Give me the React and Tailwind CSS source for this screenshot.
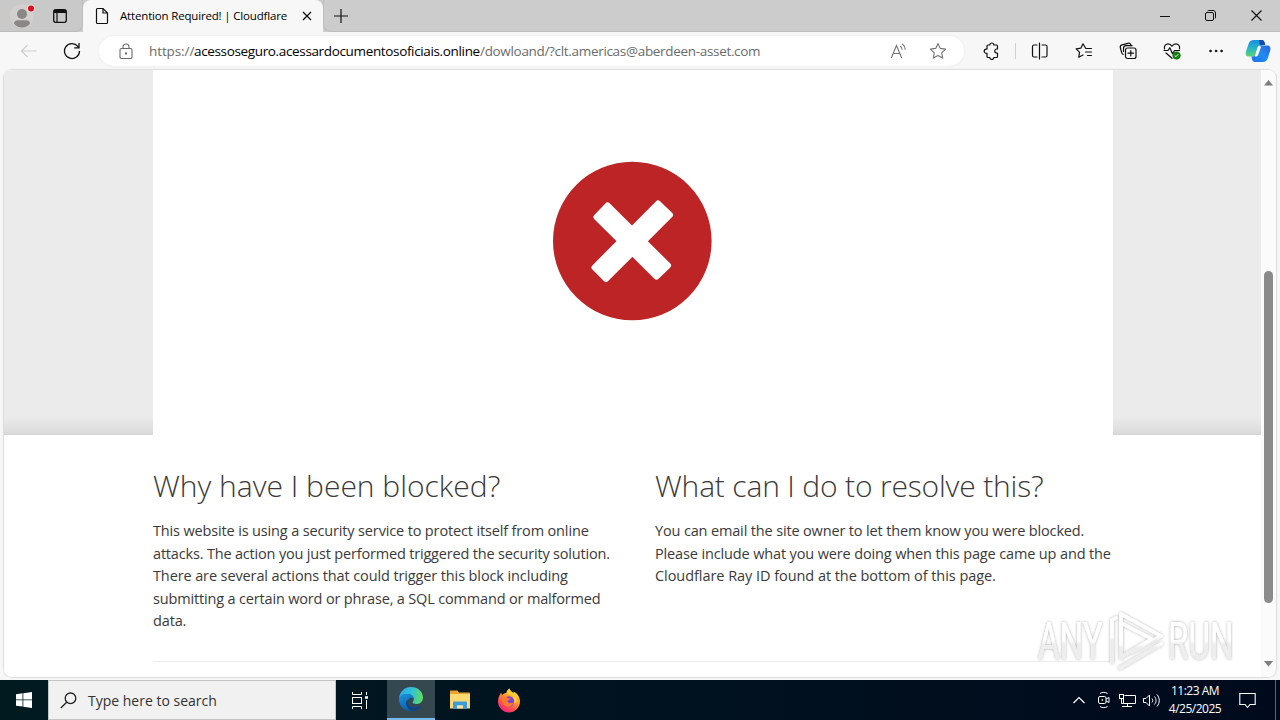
import React from "react";

// browser chrome

function TabBar() {
  return (
    <div className="flex h-8 bg-[#cccccc]">
      <div className="flex w-[83px] rounded-br-lg border-b border-r border-[#bdbdbd] bg-[#c9c9c9]">
        <div className="flex w-11 items-center justify-center">
          <svg width="32" height="30" viewBox="0 0 32 30">
            <circle cx="16" cy="15" r="12" fill="#d2d0ce" />
            <circle cx="16" cy="13" r="5" fill="#8a8785" />
            <path d="M8 22.500c0-2 1.500-3.300 3.500-3.300h9c2 0 3.500 1.300 3.500 3.300-1.800 2.500-4.700 4-8 4s-6.200-1.500-8-4z" fill="#8a8785" />
            <circle cx="25" cy="7.500" r="4" fill="#e4dcdc" />
            <circle cx="25" cy="7.500" r="3" fill="#e00b1c" />
          </svg>
        </div>
        <div className="flex w-8 items-center justify-center">
          <svg width="16" height="16" viewBox="0 0 16 16" fill="none" stroke="#111">
            <rect x="1.700" y="1.700" width="12.600" height="12.600" rx="2" strokeWidth="1.300" />
            <path d="M2 3.500h12" strokeWidth="3" />
            <path d="M5 4v10" strokeWidth="1.200" />
          </svg>
        </div>
      </div>
      <div className="flex w-[240px] items-center rounded-t-lg bg-[#f7f7f7]">
        <svg className="ml-3" width="14" height="18" viewBox="0 0 14 18" fill="none" stroke="#111" strokeWidth="1.200">
          <path d="M8 1.500H2.500c-.6 0-1 .4-1 1v13c0 .6.4 1 1 1h9c.6 0 1-.4 1-1V6L8 1.500z" />
          <path d="M8 1.500V6h4.500" />
        </svg>
        <span className="ml-[11px] w-[167px] whitespace-nowrap text-[11.5px] tracking-[-0.17px] text-black">
          Attention Required! | Cloudflare
        </span>
        <svg className="ml-[15px]" width="10" height="10" viewBox="0 0 10 10" stroke="#111" strokeWidth="1.300">
          <path d="M1 1l8 8M9 1l-8 8" />
        </svg>
      </div>
      <div className="flex w-[34px] items-center justify-center rounded-bl-lg border-b border-l border-[#bdbdbd]">
        <svg width="14" height="14" viewBox="0 0 14 14" stroke="#111" strokeWidth="1.200">
          <path d="M7 0v14M0 7h14" />
        </svg>
      </div>
      <div className="flex flex-1 justify-end border-b border-[#bdbdbd]">
        <div className="flex w-[46px] items-center justify-center">
          <svg width="10" height="10" viewBox="0 0 10 10" stroke="#111">
            <path d="M0 5.500h10" />
          </svg>
        </div>
        <div className="flex w-[46px] items-center justify-center pr-px">
          <svg width="11" height="11" viewBox="0 0 11 11" fill="none" stroke="#111">
            <rect x=".5" y="2.500" width="8" height="8" rx="1.500" />
            <path d="M2.500.8C3 .5 3 .5 4 .5h4c1.500 0 2.500 1 2.500 2.500v4c0 .8 0 1-.3 1.500" />
          </svg>
        </div>
        <div className="flex w-[46px] items-center justify-center pr-px">
          <svg width="11" height="11" viewBox="0 0 11 11" stroke="#111" strokeWidth="1.100">
            <path d="M.5.5l10 10M10.500.5l-10 10" />
          </svg>
        </div>
      </div>
    </div>
  );
}

function ToolButton({ children }) {
  return (
    <div className="flex w-11 items-center justify-center">
      <svg width="18" height="18" viewBox="0 0 18 18" fill="none" stroke="#111" strokeWidth="1.200" strokeLinejoin="round" strokeLinecap="round">
        {children}
      </svg>
    </div>
  );
}

function AddressBar() {
  return (
    <div className="ml-[5px] flex h-[30px] w-[865px] items-center rounded-full bg-white shadow-[0_0_2px_1px_#efefef]">
      <svg className="ml-5" width="14" height="17" viewBox="0 0 14 17" fill="none" stroke="#6b6b6b" strokeWidth="1.100">
        <rect x="1" y="5.500" width="12" height="10" rx="1.500" />
        <path d="M4 5.500V4a3 3 0 0 1 6 0v1.500" />
        <circle cx="7" cy="10.500" r=".6" fill="#6b6b6b" />
      </svg>
      <div className="ml-4 flex w-[727px] whitespace-nowrap text-[13.5px] leading-5 text-[#6b6b6b]">
        <span className="w-[45px] tracking-[-0.1px]">https://</span>
        <span className="w-[286px] tracking-[-0.35px] text-black">acessoseguro.acessardocumentosoficiais.online</span>
        <span className="tracking-[-0.32px]">/dowloand/?clt.americas@aberdeen-asset.com</span>
      </div>
      <svg className="ml-[14px]" width="17" height="16" viewBox="0 0 17 16" fill="none" stroke="#757575" strokeWidth="1.100" strokeLinecap="round">
        <path d="M1.500 14.500L6.500 2.500l5 12M3.200 10.500h6.600" />
        <path d="M10.500 3.300c.8.7 1.400 1.500 1.400 2.900M12.300 1c1.800 1.300 2.800 2.800 2.800 5.200" />
      </svg>
      <svg className="ml-[22px]" width="18" height="18" viewBox="0 0 18 18" fill="none" stroke="#757575" strokeWidth="1.100" strokeLinejoin="round">
        <path d="M9 1.500l2.300 4.900 5.300.7-3.900 3.700 1 5.300L9 13.500l-4.700 2.600 1-5.300L1.400 7.100l5.300-.7L9 1.500z" />
      </svg>
    </div>
  );
}

function CopilotIcon() {
  return (
    <svg width="26" height="24" viewBox="0 0 26 24">
      <defs>
        <linearGradient id="copA" x1="0" y1="0" x2="0" y2="1">
          <stop offset="0" stopColor="#1b8de4" />
          <stop offset=".5" stopColor="#27b5c9" />
          <stop offset="1" stopColor="#5ed36a" />
        </linearGradient>
        <linearGradient id="copB" x1="1" y1="0" x2="0" y2="1">
          <stop offset="0" stopColor="#2c62d8" />
          <stop offset=".5" stopColor="#1f8cf5" />
          <stop offset="1" stopColor="#1b6ff0" />
        </linearGradient>
      </defs>
      <path d="M9 1h8c2 0 2.500 2 3.200 4.500L15 6.500c-1.500 0-2.200 1-2.600 2.500L10.500 15c-.5 1.800-1.300 2.500-3 2.500H4C1 17.500.3 15.500 1 12.500L3.500 5C4.500 2 6 1 9 1z" fill="url(#copA)" />
      <path d="M16.500 1c2.500 0 3 2 3.700 4.800L15 6.500 14 1z" fill="#144ba8" />
      <path d="M17.500 23h-7c-2.500 0-3.500-1.500-4-5.500h1c1.700 0 2.700-.7 3.200-2.500h1.500l2.300-7c.4-1.200 1-1.600 2-1.600H22c3 0 4 2 3.200 5L23 18.500C22 21.500 20.500 23 17.500 23z" fill="url(#copB)" />
      <path d="M13.300 7.500h2.900l-3.200 8.700c-.4 1.100-1.200 1.400-3.200 1.400l.9-2.600z" fill="#fff" />
    </svg>
  );
}

function Toolbar() {
  return (
    <div className="flex h-[38px] items-center bg-[#f7f7f7] pl-1.5">
      <div className="flex w-11 items-center justify-center">
        <svg width="17" height="14" viewBox="0 0 17 14" fill="none" stroke="#cdcdcd" strokeWidth="1.200">
          <path d="M16.500 7H1.500M7.500 1l-6 6 6 6" />
        </svg>
      </div>
      <div className="flex w-11 items-center justify-center">
        <svg width="18" height="18" viewBox="0 0 18 18" fill="none" stroke="#111" strokeWidth="1.300">
          <path d="M16.500 9A7.500 7.500 0 1 1 14.800 4.300L15.700 5.500" />
          <path d="M16 1v4.800h-4.800" />
        </svg>
      </div>
      <AddressBar />
      <div className="ml-[5px] flex">
        <ToolButton>
          <path d="M6 3H7.800a2 2 0 0 1 4 0H14.500c.6 0 1 .4 1 1V7h-.7a2 2 0 0 0 0 4h.7v3.500c0 .6-.4 1-1 1h-2.700a2 2 0 0 1-4 0H6c-.6 0-1-.4-1-1v-3.200H4.300a2 2 0 0 1 0-4.200H5V4c0-.6.4-1 1-1z" />
        </ToolButton>
      </div>
      <div className="flex w-[5px] justify-center">
        <div className="h-4 w-px bg-[#d0d0d0]" />
      </div>
      <ToolButton>
        <path d="M6 3H3c-.8 0-1.500.7-1.500 1.500v9c0 .8.700 1.500 1.500 1.500h3M11 3h3.500c.8 0 1.500.7 1.500 1.500v9c0 .8-.7 1.500-1.500 1.500H11M8.500 1v16" />
      </ToolButton>
      <ToolButton>
        <path d="M11 6.500h-.2L8 1.800 5.800 6.200l-4.600.7 3.400 3.400-.9 4.900L8 13M11.500 6.500h5M10.500 10h6M12.500 13.500h4" />
      </ToolButton>
      <ToolButton>
        <rect x="6.500" y="6" width="10.500" height="10.500" rx="2" />
        <path d="M11.800 8.500v5.500M9 11.200h5.500M4.200 12.500C3 12 2.800 11.300 2.500 10.200L1.300 5.500C1 4 1.500 3.200 3 2.800l6-1.500c1.500-.3 2.400 0 2.800 1.500l.3.900" />
        <path d="M4.500 9.500V6.500c0-2 .8-2.800 2.800-2.800H13" />
      </ToolButton>
      <ToolButton>
        <path d="M1.500 7C.8 3.500 3 1.800 5 1.800S8.300 3 9 4.200C9.700 3 11 1.800 13 1.800S17.200 3.500 16.500 7M3 11l6 5.300M1 8.500h4l1.800-2.800 2.700 6 2-3.200h5" />
        <circle cx="13.500" cy="13.500" r="3.800" fill="#107c10" stroke="#107c10" strokeWidth=".5" />
        <path d="M12 13.700l1 1 2-2.200" stroke="#fff" strokeWidth="1" />
      </ToolButton>
      <ToolButton>
        <circle cx="3.500" cy="9" r=".9" fill="#111" strokeWidth=".8" />
        <circle cx="9" cy="9" r=".9" fill="#111" strokeWidth=".8" />
        <circle cx="14.500" cy="9" r=".9" fill="#111" strokeWidth=".8" />
      </ToolButton>
      <div className="flex w-10 justify-center">
        <CopilotIcon />
      </div>
    </div>
  );
}

// page

function BlockedPage() {
  return (
    <div className="h-full w-[1257px] bg-white">
      <div className="flex h-[365px] bg-[linear-gradient(to_top,#d6d6d6,#dedede_4px,#ebebeb_18px)] pl-[149px]">
        <div className="flex w-[960px] justify-center bg-white pt-[91px]">
          <svg width="160" height="160" viewBox="0 0 160 160">
            <circle cx="79.300" cy="80" r="79.300" fill="#bd2426" />
            <g fill="#fff" stroke="#fff" strokeWidth="6" strokeLinejoin="round">
              <path d="M105 42.500L117 54 53 118 41.500 106.500z" />
              <path d="M54.500 44.500L115 104.500 103.500 115.500 43.500 56z" />
            </g>
          </svg>
        </div>
      </div>
      <div className="ml-[149px] flex w-[960px] gap-[45px] pt-7 text-[#3a3a3a]">
        <div className="w-[457px] whitespace-nowrap">
          <h2 className="text-[30px] font-light leading-[45px]">Why have I been blocked?</h2>
          <p className="mt-3 text-[14.5px] leading-[22.5px]">
            <span className="block tracking-[-0.147px]">This website is using a security service to protect itself from online</span>
            <span className="block tracking-[-0.18px]">attacks. The action you just performed triggered the security solution.</span>
            <span className="block tracking-[-0.115px]">There are several actions that could trigger this block including</span>
            <span className="block tracking-[-0.165px]">submitting a certain word or phrase, a SQL command or malformed</span>
            <span className="block tracking-[-0.15px]">data.</span>
          </p>
        </div>
        <div className="w-[457px] whitespace-nowrap">
          <h2 className="text-[30px] font-light leading-[45px] tracking-[-0.17px]">What can I do to resolve this?</h2>
          <p className="mt-3 text-[14.5px] leading-[22.5px]">
            <span className="block tracking-[-0.15px]">You can email the site owner to let them know you were blocked.</span>
            <span className="block tracking-[-0.137px]">Please include what you were doing when this page came up and the</span>
            <span className="block tracking-[-0.05px]">Cloudflare Ray ID found at the bottom of this page.</span>
          </p>
        </div>
      </div>
      <div className="ml-[149px] mt-7 w-[960px] border-t border-[#ebebeb]" />
    </div>
  );
}

function Scrollbar() {
  return (
    <div className="flex w-[14px] flex-col items-center bg-[#fbfbfb] pt-[10px]">
      <svg width="9" height="6" viewBox="0 0 9 6">
        <path d="M4.500 0L9 5.500H0z" fill="#7d7d7d" />
      </svg>
      <div className="mt-[185px] h-[332px] w-[9px] rounded-full bg-[#8b8b8b]" />
      <svg className="mt-[58px]" width="9" height="6" viewBox="0 0 9 6">
        <path d="M4.500 5.500L9 0H0z" fill="#7d7d7d" />
      </svg>
    </div>
  );
}

function Watermark() {
  return (
    <svg className="absolute left-[1030px] top-[602px] overflow-visible" width="240" height="76" viewBox="0 0 240 76">
      <defs>
        <linearGradient id="wm" x1="0" y1="0" x2="0" y2="1">
          <stop offset=".48" stopColor="#fff" />
          <stop offset=".54" stopColor="#eeeeee" />
        </linearGradient>
        <filter id="wmShadow" x="-10%" y="-10%" width="120%" height="120%">
          <feDropShadow dx="0" dy="0" stdDeviation="1.500" floodColor="#000" floodOpacity=".35" />
        </filter>
      </defs>
      <g filter="url(#wmShadow)" fill="url(#wm)" fontFamily="Roboto, sans-serif" fontSize="51">
        <text transform="translate(8 57) scale(.65 1)">ANY</text>
        <text transform="translate(138 57) scale(.65 1)">RUN</text>
      </g>
      <g filter="url(#wmShadow)" fill="none" stroke="url(#wm)" strokeWidth="3.500" strokeLinejoin="round" strokeLinecap="round">
        <path d="M82 60V18l4-2M91 48V12l40 22-29 16" />
        <path d="M91 56V21l31 16-31 18M90 66l41-24" />
      </g>
    </svg>
  );
}

// taskbar

function EdgeIcon() {
  return (
    <svg width="26" height="26" viewBox="0 0 26 26">
      <defs>
        <linearGradient id="edgeTop" x1="0" y1=".4" x2="1" y2=".5">
          <stop offset="0" stopColor="#2da7e8" />
          <stop offset=".5" stopColor="#2fc0dc" />
          <stop offset="1" stopColor="#62dc5b" />
        </linearGradient>
        <linearGradient id="edgeLow" x1="0" y1="0" x2=".6" y2="1">
          <stop offset="0" stopColor="#1a93e0" />
          <stop offset="1" stopColor="#0c59a4" />
        </linearGradient>
      </defs>
      <path d="M1 12.500C1.500 5.800 6.600 1 13 1c7 0 12 5 12 10.500 0 4-3 6.500-6.500 6.500-2.500 0-4-.9-4-1.700 0-.7 1.300-1.200 1.300-3.300 0-2.500-2.500-5-6.300-5C5.500 8 2.500 9.800 1 12.500z" fill="url(#edgeTop)" />
      <path d="M1 13c.2-3 4-5 8.500-5 3.800 0 6.300 2.500 6.300 5-1.500-2-5.800-1.500-6 2.500-.2 4.500 5 7.500 12.200 4.500.8-.3 1.200.2.700.8C20.500 23.500 17 25 13 25 6 25 .8 19.500 1 13z" fill="url(#edgeLow)" />
      <path d="M9.800 15.500C9.600 20 14.800 23 22 20c.8-.3 1.200.2.700.8-2 2.500-5 4-8.700 4.100-5-1.400-8-8.400-4.200-11.400-.1.500 0 1.200 0 2z" fill="#12437f" />
    </svg>
  );
}

function FolderIcon() {
  return (
    <svg width="22" height="20" viewBox="0 0 22 20">
      <path d="M1 1.500c0-.6.4-1 1-1h6.500l1.500 2H20c.6 0 1 .4 1 1V18H1z" fill="#e9a52c" />
      <path d="M1 4h20v14.500H1z" fill="#fcd873" />
      <path d="M4 12.500c0-.6.4-1 1-1h12c.6 0 1 .4 1 1V19h-4v-3.500H8V19H4z" fill="#3d9bd9" />
      <path d="M8 15.500h6V18.500H8z" fill="#f5e2a0" />
    </svg>
  );
}

function FirefoxIcon() {
  return (
    <svg width="24" height="25" viewBox="0 0 24 25">
      <defs>
        <linearGradient id="ffA" x1=".8" y1="0" x2=".2" y2="1">
          <stop offset="0" stopColor="#ffe646" />
          <stop offset=".4" stopColor="#ff9a2c" />
          <stop offset=".75" stopColor="#ff4358" />
          <stop offset="1" stopColor="#ee1f82" />
        </linearGradient>
      </defs>
      <path d="M1 13.500C1 9.500 2.500 7 4.200 4.500c.2 1.200.5 2 1 2.500C6.500 5.500 8 5 9.200 5c.5-2 2-3.800 3.300-4.500 0 2.500 2 3.800 4 5.500.2-1 .1-1.700-.2-2.500C20.500 5 23 9 23 13.500 23 19.500 18 24.500 12 24.500S1 19.500 1 13.500z" fill="url(#ffA)" />
      <path d="M12.500.5c-2 1.200-2.700 3.500-2.500 5.500 2-.3 4 .3 5.500 2 2 2.500 2.500 6-.5 9 4.500-1 6.500-6 3.500-10C16.500 4.500 13 3 12.500.5z" fill="#ffcd38" />
      <circle cx="12" cy="13.500" r="5.200" fill="#7a45d6" />
      <path d="M4.500 10c2.500-2 5-1.500 6.500.2h2.500c0 1.300-2.500 1.800-3 3 .3 2 3.500 2.300 6 1.300-1 3-3.500 4.700-6.300 4.200C6.500 18 4.200 14 4.500 10z" fill="#ff7a2f" />
    </svg>
  );
}

function Taskbar() {
  return (
    <div className="flex h-10 bg-[linear-gradient(to_right,#001a20,#00121f_50%,#000a1d)]">
      <div className="flex w-12 items-center justify-center">
        <svg width="16" height="16" viewBox="0 0 16 16" fill="#fff">
          <path d="M0 2.200l6.500-.9v6.200H0zM7.300 1.200L16 0v7.500H7.300zM0 8.300h6.500v6.300L0 13.700zM7.300 8.300H16V16l-8.700-1.200z" />
        </svg>
      </div>
      <div className="flex w-[288px] items-center border border-[#c4c4c4] bg-[#f1f1f1]">
        <svg className="ml-[11px]" width="17" height="17" viewBox="0 0 17 17" fill="none" stroke="#222" strokeWidth="1.300">
          <circle cx="10.500" cy="6.300" r="5.300" />
          <path d="M6.700 10.200L.8 16" />
        </svg>
        <span className="ml-[11px] mt-px whitespace-nowrap text-[14px] text-[#333]">Type here to search</span>
      </div>
      <div className="flex w-[51px] items-center justify-center pr-1">
        <svg width="18" height="17" viewBox="0 0 18 17" fill="none" stroke="#fff">
          <path d="M1.500 0v2.500h9V0M1.500 17v-2.500h9V17M15.500 0v3M15.500 8v9" />
          <rect x="1.500" y="5.500" width="9" height="6" />
          <path d="M14 5.500h3" strokeWidth="2.500" />
        </svg>
      </div>
      <div className="flex w-12 items-center justify-center border-b-2 border-[#76b9ed] bg-[#36484f]">
        <EdgeIcon />
      </div>
      <div className="flex w-[49px] items-center justify-center">
        <FolderIcon />
      </div>
      <div className="flex w-[49px] items-center justify-center">
        <FirefoxIcon />
      </div>
      <div className="ml-auto flex items-center text-white">
        <svg width="12" height="8" viewBox="0 0 12 8" fill="none" stroke="#fff" strokeWidth="1.200">
          <path d="M.5 7L6 1.500 11.500 7" />
        </svg>
        <svg className="ml-[13px]" width="12" height="18" viewBox="0 0 12 18" fill="none" stroke="#fff">
          <rect x=".5" y="5.500" width="7.500" height="7" rx="1.500" />
          <path d="M8 8l3-1.500v5L8 10M2 2.500c2-1.500 5.500-1.500 7.500 0M2 15.500c2 1.500 5.500 1.500 7.500 0" />
          <circle cx="4.300" cy="9" r=".5" />
        </svg>
        <svg className="ml-[9px]" width="17" height="15" viewBox="0 0 17 15" fill="none" stroke="#fff">
          <path d="M5.500 2.500h11v8H4.500V6M3 13.500h10M8.500 10.500v3" />
          <rect x=".5" y="1.500" width="4" height="4" />
          <path d="M2.500 5.500v5h2" />
        </svg>
        <svg className="ml-[7px]" width="18" height="15" viewBox="0 0 18 15" fill="none" stroke="#fff">
          <path d="M.5 5.500h2.500L6.500 2v11L3 9.500H.5zM9 5.500c.9 1.300.9 2.700 0 4M11.500 3.500c2 2.500 2 5.500 0 8M14 1.500c3 3.700 3 8.300 0 12" />
        </svg>
        <div className="ml-[4px] w-[60px] whitespace-nowrap text-center text-[12px] leading-[18px] tracking-[-0.5px]">
          <div>11:23 AM</div>
          <div>4/25/2025</div>
        </div>
        <svg className="ml-[14px]" width="17" height="17" viewBox="0 0 17 17" fill="none" stroke="#fff" strokeWidth="1.100">
          <path d="M.8 1.500h15.400v11H11l-2.500 3-2.500-3H.8z" />
        </svg>
        <div className="ml-[19px] mr-1 h-10 w-px bg-[#5b6470]" />
      </div>
    </div>
  );
}

export default function App() {
  return (
    <div className="relative flex h-[720px] w-[1280px] flex-col overflow-hidden bg-[#f7f7f7] font-['Open_Sans','Noto_Sans',sans-serif]">
      <TabBar />
      <Toolbar />
      <div className="mx-1 flex h-[607px] overflow-hidden rounded-lg bg-[#fbfbfb] shadow-[0_0_1px_1px_#dcdcdc]">
        <BlockedPage />
        <Scrollbar />
      </div>
      <div className="h-[3px]" />
      <Taskbar />
      <Watermark />
    </div>
  );
}
